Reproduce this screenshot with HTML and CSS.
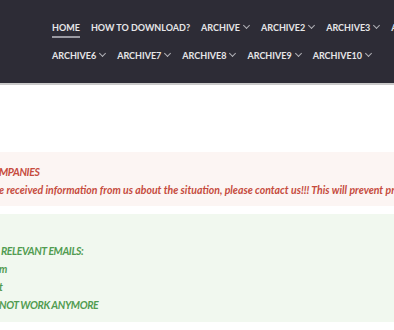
FILE: index.html
```html
<!DOCTYPE html>
<html lang="en">
<head>
  <meta charset="UTF-8">
  <meta name="viewport" content="width=device-width, initial-scale=1.0">
  <title>Archive</title>
  <link rel="stylesheet" href="styles.css">
</head>
<body>
  <header class="site-header">
    <nav class="main-nav">
      <a class="nav-item active" href="#">HOME</a>
      <a class="nav-item" href="#">HOW TO DOWNLOAD?</a>
      <a class="nav-item drop" href="#">ARCHIVE</a>
      <a class="nav-item drop" href="#">ARCHIVE2</a>
      <a class="nav-item drop" href="#">ARCHIVE3</a>
      <a class="nav-item drop" href="#">ARCHIVE4</a>
      <a class="nav-item drop" href="#">ARCHIVE5</a>
      <a class="nav-item drop" href="#">ARCHIVE6</a>
      <a class="nav-item drop" href="#">ARCHIVE7</a>
      <a class="nav-item drop" href="#">ARCHIVE8</a>
      <a class="nav-item drop" href="#">ARCHIVE9</a>
      <a class="nav-item drop" href="#">ARCHIVE10</a>
    </nav>
  </header>

  <main class="content">
    <div class="notice notice-warn">
      <p class="caps">MPANIES</p>
      <p>e received information from us about the situation, please contact us!!! This will prevent problems in the future.</p>
    </div>

    <div class="notice notice-ok">
      <p class="caps">&nbsp;RELEVANT EMAILS:</p>
      <p>m</p>
      <p>t</p>
      <p class="caps">NOT WORK ANYMORE</p>
    </div>
  </main>
</body>
</html>
```

FILE: styles.css
```css
* {
  box-sizing: border-box;
}
html, body {
  overflow: hidden;
}
body {
  margin: 0;
  font-family: Lato, "Open Sans", sans-serif;
  background: #fff;
  width: 394px;
}
.site-header {
  background: #2d2c36;
  border-bottom: 2px solid #c9c9c9;
  height: 85px;
  padding: 20px 0 0 52px;
}
.main-nav {
  width: 480px;
  display: flex;
  flex-wrap: wrap;
  column-gap: 11px;
  row-gap: 10px;
}
.nav-item {
  color: #e6e6e8;
  text-decoration: none;
  font-size: 9px;
  font-weight: 700;
  line-height: 16px;
  white-space: nowrap;
  border-bottom: 2px solid transparent;
}
.nav-item.active {
  border-bottom-color: #9a9aa2;
}
.nav-item.drop::after {
  content: "";
  display: inline-block;
  width: 4px;
  height: 4px;
  margin: 0 1px 3px 4px;
  border-right: 1px solid #b0b0b6;
  border-bottom: 1px solid #b0b0b6;
  transform: rotate(45deg);
}
.content {
  padding-top: 67px;
}
.notice {
  margin-left: -1px;
  font-style: italic;
  font-weight: 700;
  font-size: 10.5px;
  white-space: nowrap;
}
.notice p {
  margin: 0;
  line-height: 18px;
}
.notice p.caps {
  letter-spacing: -0.4px;
}
.notice-warn {
  background: #fcf5f3;
  color: #c64b3d;
  height: 54px;
  padding-top: 11px;
}
.notice-ok {
  background: #f1f8ef;
  color: #519c51;
  margin-top: 8px;
  height: 108px;
  padding-top: 28px;
}
```
